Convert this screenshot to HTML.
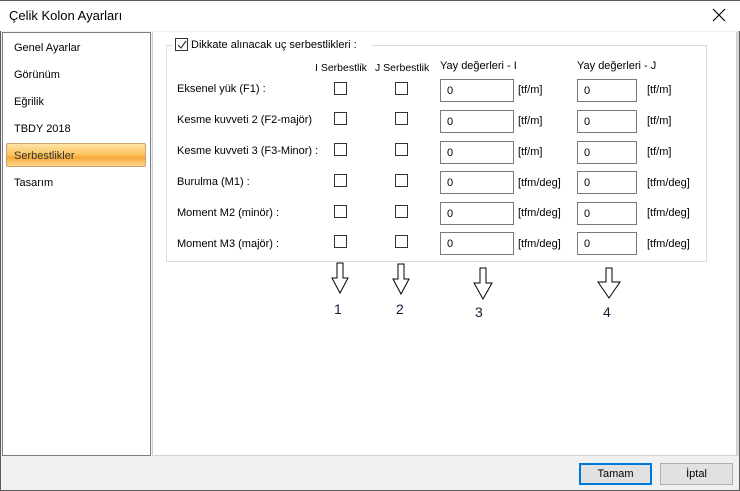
<!DOCTYPE html>
<html><head><meta charset="utf-8"><style>
*{margin:0;padding:0;box-sizing:border-box}
body{width:740px;height:491px;overflow:hidden;background:#f0f0f0;font-family:"Liberation Sans",sans-serif;font-size:11px;color:#000;position:relative}
.a{position:absolute;white-space:nowrap}
.cb{position:absolute;width:13px;height:13px;border:1px solid #333;background:#fff}
.in{position:absolute;height:23px;border:1px solid #7a7a7a;background:#fff;padding:5px 0 0 6px}
.n{position:absolute;font-size:14px;font-family:"Liberation Sans",sans-serif;color:#102040}
</style></head><body>
<div class="a" style="left:0;top:0;width:740px;height:491px;border:1px solid #5a5a5a;border-top:none"></div>
<div class="a" style="left:0;top:0;width:740px;height:31px;background:#fff;border-top:1px solid #5a5a5a"></div>
<div class="a" style="left:9px;top:8px;font-size:13px">Çelik Kolon Ayarları</div>
<svg class="a" style="left:712px;top:8px" width="14" height="14"><path d="M1 1L13 13M13 1L1 13" stroke="#000" stroke-width="1.2"/></svg>
<div class="a" style="left:2px;top:32px;width:149px;height:424px;background:#fff;border:1px solid #7a7f86"></div>
<div class="a" style="left:152px;top:32px;width:585px;height:424px;background:#fff;border:1px solid #d0d0d0;border-top:none"></div>
<div class="a" style="left:737px;top:31px;width:2px;height:425px;background:#d8d8d8"></div>
<div class="a" style="left:14px;top:42px">Genel Ayarlar</div>
<div class="a" style="left:14px;top:69px">Görünüm</div>
<div class="a" style="left:14px;top:96px">Eğrilik</div>
<div class="a" style="left:14px;top:123px">TBDY 2018</div>
<div class="a" style="left:6px;top:143px;width:140px;height:24px;border:1px solid #c9a46a;border-radius:2px;background:linear-gradient(#fde2a6,#fcc35d 50%,#f8a83a 60%,#fcd68a)"></div>
<div class="a" style="left:14px;top:150px;color:#333">Serbestlikler</div>
<div class="a" style="left:14px;top:177px">Tasarım</div>
<div class="a" style="left:166px;top:45px;width:541px;height:217px;border:1px solid #dcdcdc"></div>
<div class="a" style="left:172px;top:38px;width:200px;height:14px;background:#fff"></div>
<div class="cb" style="left:175px;top:38px"></div>
<svg class="a" style="left:176px;top:39px" width="12" height="12"><path d="M2 6L5 9L10 2" stroke="#333" stroke-width="1.2" fill="none"/></svg>
<div class="a" style="left:191px;top:39px">Dikkate alınacak uç serbestlikleri :</div>
<div class="a" style="left:315px;top:62px;font-size:10.5px">I Serbestlik</div>
<div class="a" style="left:375px;top:62px;font-size:10.5px">J Serbestlik</div>
<div class="a" style="left:440px;top:60px">Yay değerleri - I</div>
<div class="a" style="left:577px;top:60px">Yay değerleri - J</div>

<div class="a" style="left:177px;top:83px">Eksenel yük (F1) :</div>
<div class="a" style="left:177px;top:114px">Kesme kuvveti 2 (F2-majör)</div>
<div class="a" style="left:177px;top:145px">Kesme kuvveti 3 (F3-Minor) :</div>
<div class="a" style="left:177px;top:176px">Burulma (M1) :</div>
<div class="a" style="left:177px;top:207px">Moment M2 (minör) :</div>
<div class="a" style="left:177px;top:238px">Moment M3 (majör) :</div>

<div class="cb" style="left:334px;top:82px"></div><div class="cb" style="left:395px;top:82px"></div>
<div class="cb" style="left:334px;top:112px"></div><div class="cb" style="left:395px;top:112px"></div>
<div class="cb" style="left:334px;top:143px"></div><div class="cb" style="left:395px;top:143px"></div>
<div class="cb" style="left:334px;top:174px"></div><div class="cb" style="left:395px;top:174px"></div>
<div class="cb" style="left:334px;top:205px"></div><div class="cb" style="left:395px;top:205px"></div>
<div class="cb" style="left:334px;top:235px"></div><div class="cb" style="left:395px;top:235px"></div>

<div class="in" style="left:440px;top:79px;width:74px">0</div><div class="a" style="left:518px;top:84px">[tf/m]</div>
<div class="in" style="left:577px;top:79px;width:60px">0</div><div class="a" style="left:647px;top:84px">[tf/m]</div>
<div class="in" style="left:440px;top:110px;width:74px">0</div><div class="a" style="left:518px;top:115px">[tf/m]</div>
<div class="in" style="left:577px;top:110px;width:60px">0</div><div class="a" style="left:647px;top:115px">[tf/m]</div>
<div class="in" style="left:440px;top:141px;width:74px">0</div><div class="a" style="left:518px;top:146px">[tf/m]</div>
<div class="in" style="left:577px;top:141px;width:60px">0</div><div class="a" style="left:647px;top:146px">[tf/m]</div>
<div class="in" style="left:440px;top:171px;width:74px">0</div><div class="a" style="left:518px;top:177px">[tfm/deg]</div>
<div class="in" style="left:577px;top:171px;width:60px">0</div><div class="a" style="left:647px;top:177px">[tfm/deg]</div>
<div class="in" style="left:440px;top:202px;width:74px">0</div><div class="a" style="left:518px;top:207px">[tfm/deg]</div>
<div class="in" style="left:577px;top:202px;width:60px">0</div><div class="a" style="left:647px;top:207px">[tfm/deg]</div>
<div class="in" style="left:440px;top:232px;width:74px">0</div><div class="a" style="left:518px;top:238px">[tfm/deg]</div>
<div class="in" style="left:577px;top:232px;width:60px">0</div><div class="a" style="left:647px;top:238px">[tfm/deg]</div>

<svg class="a" style="left:330px;top:262px" width="20" height="34"><path d="M7 1H13V16H18L10 31L2 16H7Z" stroke="#000" fill="#fff"/></svg>
<svg class="a" style="left:391px;top:263px" width="20" height="34"><path d="M7 1H13V16H18L10 31L2 16H7Z" stroke="#000" fill="#fff"/></svg>
<svg class="a" style="left:472px;top:267px" width="22" height="34"><path d="M8 1H14V16H20L11 32L2 16H8Z" stroke="#000" fill="#fff"/></svg>
<svg class="a" style="left:597px;top:267px" width="26" height="34"><path d="M9 1H15V15H23L12 31L1 15H9Z" stroke="#000" fill="#fff"/></svg>
<div class="n" style="left:334px;top:301px">1</div>
<div class="n" style="left:396px;top:301px">2</div>
<div class="n" style="left:475px;top:304px">3</div>
<div class="n" style="left:603px;top:304px">4</div>

<div class="a" style="left:579px;top:463px;width:73px;height:22px;border:2px solid #0078d7;background:#e1e1e1;text-align:center;line-height:18px">Tamam</div>
<div class="a" style="left:660px;top:463px;width:73px;height:22px;border:1px solid #adadad;background:#e1e1e1;text-align:center;line-height:20px">İptal</div>
</body></html>
